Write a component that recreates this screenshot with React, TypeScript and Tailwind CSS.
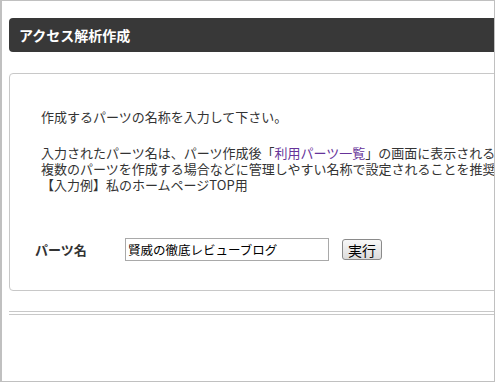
import React from 'react'

const jp = { fontFamily: '"Noto Sans CJK JP", "Liberation Sans", sans-serif' }

export default function App() {
  return (
    <div
      className="relative h-[382px] w-[495px] overflow-hidden border border-l-2 border-[#c0c0c0] bg-white text-[#333]"
      style={jp}
    >
      <div className="w-[640px] pl-[7px] pt-[17px]">
        <div className="flex h-[34px] items-center rounded-l-[4px] bg-[#383838] px-[10px] text-[14px] font-bold text-white">
          アクセス解析作成
        </div>

        <div className="mt-[21px] h-[218px] rounded-[4px] border border-[#c8c8c8] pl-[31px] pt-[35px] text-[13px] leading-[16px]">
          <p className="whitespace-nowrap">作成するパーツの名称を入力して下さい。</p>
          <div className="mt-[20px] whitespace-nowrap">
            <p>
              入力されたパーツ名は、パーツ作成後「<span className="text-[#663399]">利用パーツ一覧</span>」の画面に表示される名称です。
            </p>
            <p>複数のパーツを作成する場合などに管理しやすい名称で設定されることを推奨します。</p>
            <p>【入力例】私のホームページTOP用</p>
          </div>

          <div className="mt-[45px] flex items-center">
            <div className="-ml-[6px] w-[90px] text-[13px] font-bold">パーツ名</div>
            <input
              defaultValue="賢威の徹底レビューブログ"
              className="h-[23px] w-[204px] border border-[#a9a9a9] px-[2px] text-[12.5px] text-black outline-none"
              style={jp}
            />
            <button
              className="ml-[13px] h-[21px] w-[40px] rounded-[3px] border border-[#8a8a8a] bg-gradient-to-b from-[#f8f8f8] to-[#dcdcdc] text-[14px] leading-none text-black"
              style={jp}
            >
              実行
            </button>
          </div>
        </div>

        <div className="mt-[20px] h-[4px] border-y border-[#c8c8c8]" />
      </div>
    </div>
  )
}
